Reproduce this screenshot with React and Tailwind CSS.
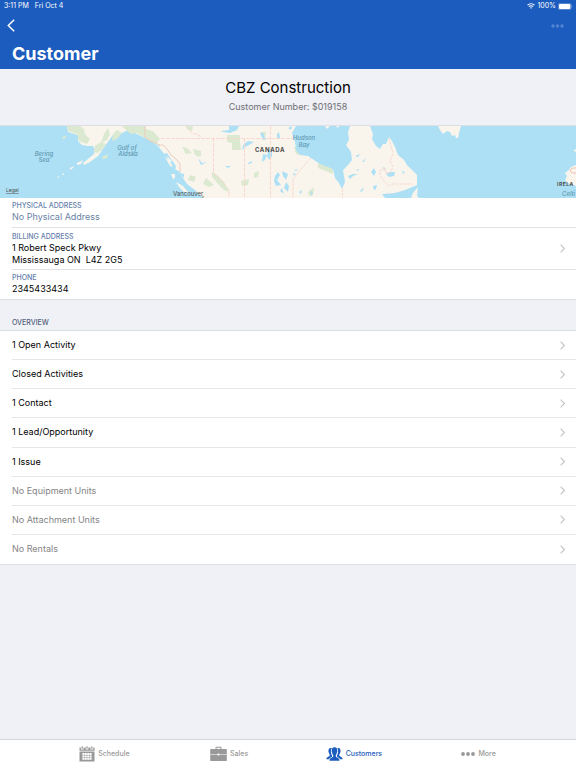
import React, { useState } from "react";

const OVERVIEW = [
  { label: "1 Open Activity" },
  { label: "Closed Activities" },
  { label: "1 Contact" },
  { label: "1 Lead/Opportunity" },
  { label: "1 Issue" },
  { label: "No Equipment Units", empty: true },
  { label: "No Attachment Units", empty: true },
  { label: "No Rentals", empty: true },
];

const Chevron = () => (
  <svg viewBox="0 0 5 9" className="w-[5px] h-[9px] shrink-0 text-[#c4c4c8]" fill="none" stroke="currentColor" strokeWidth="1.1" aria-hidden="true">
    <path d="M0.6 0.6 4.4 4.5 0.6 8.4" />
  </svg>
);

const CalendarIcon = () => (
  <svg viewBox="0 0 16 16" className="w-4 h-4" fill="currentColor" aria-hidden="true">
    <path d="M2.6 0.3h1.2v2.4H2.6zM7.4 0.3h1.2v2.4H7.4zM12.2 0.3h1.2v2.4h-1.2z" />
    <path d="M0.5 1.6h1.4v1.8h2.6V1.6h2.2v1.8h2.6V1.6h2.2v1.8h2.6V1.6h1.4V4.8H0.5z" />
    <path fillRule="evenodd" d="M0.5 5.5h15v10h-15zM3.4 7v6.8h9.2V7z" />
    <path d="M5.5 7h.4v6.8h-.4zM7.8 7h.4v6.8h-.4zM10.1 7h.4v6.8h-.4zM3.4 9h9.2v.4H3.4zM3.4 11.3h9.2v.4H3.4z" />
  </svg>
);

const BriefcaseIcon = () => (
  <svg viewBox="0 0 17 16" className="w-[17px] h-4" fill="currentColor" aria-hidden="true">
    <path fillRule="evenodd" d="M5.5 3V1.8c0-.6.4-1 1-1h4c.6 0 1 .4 1 1V3h4.8c.3 0 .5.2.5.5v4.8H9.3V7.4H7.7v.9H.2V3.5c0-.3.2-.5.5-.5zM6.5 3h4V1.8h-4z" />
    <path d="M.2 8.8h7.5v.8h1.6v-.8h7.5v5.7c0 .3-.2.5-.5.5H.7c-.3 0-.5-.2-.5-.5z" />
  </svg>
);

const PeopleIcon = () => (
  <svg viewBox="0 0 17 14" className="w-[17px] h-[14px]" fill="currentColor" aria-hidden="true">
    <path d="M5.2 1C3.3.8 2.3 2 2.5 4c-.2.4 0 1.1.2 1.3.2 1 .5 1.6 1 2.1v1.4C3.4 9.8.5 9.7.3 12.3h2.9c.3-1.6 1.5-2.1 2.8-2.600V8.400C5.300 7.300 4.900 5.900 4.900 3.900 4.900 2.700 5.200 1.800 5.900 1.200z" />
    <path d="M11.800 1c1.900-.2 2.900 1 2.700 3 .2.400 0 1.100-.2 1.300-.2 1-.5 1.600-1 2.100v1.400c.3 1 3.200.9 3.400 3.500h-2.900c-.3-1.600-1.500-2.100-2.800-2.600V8.400c.7-1.100 1.100-2.500 1.100-4.500 0-1.200-.3-2.100-1-2.700z" />
    <path d="M8.500.3c-2.100 0-2.900 1.400-2.700 3.500-.4.300-.1 1.500.3 1.800.2 1.200.5 1.900 1.100 2.500v1.500c-.5 1.100-3.500 1-3.700 4.100h10c-.2-3.100-3.200-3-3.700-4.100V8.100c.6-.6.9-1.300 1.100-2.500.4-.3.700-1.500.3-1.800.2-2.100-.6-3.500-2.700-3.500z" />
  </svg>
);

const DotsIcon = () => (
  <svg viewBox="0 0 14 4" className="w-[14px] h-1" fill="currentColor" aria-hidden="true">
    <circle cx="2" cy="2" r="1.9" />
    <circle cx="7" cy="2" r="1.9" />
    <circle cx="12" cy="2" r="1.9" />
  </svg>
);

const TABS = [
  { label: "Schedule", Icon: CalendarIcon },
  { label: "Sales", Icon: BriefcaseIcon },
  { label: "Customers", Icon: PeopleIcon },
  { label: "More", Icon: DotsIcon },
];

const CustomerMap = () => (
  <svg viewBox="0 0 576 72" preserveAspectRatio="xMidYMid slice" className="block w-full h-[72px] bg-[#ade0f5]" role="img" aria-label="Map">
    {/* land */}
    <g fill="#f9f5ed">
      <path d="M67 0 68 6 78 9 78 15 82 19 88 20 93 20 95 24 94 28 88 33 83 37 84 39 90 36 98 30 105 20 110 13 115 6 122 7 128 4 137 8 145 12 151 15 157 19 162 25 168 33 175 43 180 46 183 52 187 58 195 64 203 72 385 72 382 68 395 67 405 64 417 59 417 49 407 39 404 34 398 29 395 21 392 15 389 11 386 18 383 18 380 23 376 20 372 13 373 8 370 0z" />
      <path d="M438 0 440 4 443 8 447 5 450 6 452 10 455 9 456 12 458 12 459 7 461 0z" />
      <path d="M576 39 571 41 569 44 565 47 567 50 565 54 568 57 576 60zM576 23 574 24 574 25 576 26z" />
      <path d="M411 72 413 67 418 61 417 70 419 72zM77 37 83 34 81 38 77 39zM70 42 74 40 73 42 70 44zM62 49 64 47 64 49zM57 51 60 50 58 52z" />
    </g>
    {/* parks and forest */}
    <g fill="#dbe9d0">
      <path d="M67 0 68 5 77 8 79 15 87 18 90 13 85 8 84 3 80 0zM62 11 66 10 66 12 63 13zM95 20 101 16 106 18 102 24 97 27 94 26zM101 17 104 8 108 2 110 8 107 14zM113 8 117 4 122 7 117 13 112 15zM102 31 108 28 107 32 103 33zM122 0 145 0 145 12 137 7 131 8 125 3zM145 3 153 5 160 13 156 18 146 12z" />
      <path d="M227 9 240 9 240 16 241 24 232 24 232 17 227 16zM182 21 187 22 192 27 186 28zM193 23 201 25 201 30 195 29zM196 28 200 30 197 31zM186 0 193 0 192 5 187 3zM261 6 266 6 265 12 261 9zM212 46 217 49 224 56 229 66 224 64 219 59 212 51zM190 49 196 51 194 56 188 54zM206 52 214 59 209 61 203 58zM254 47 259 45 258 51 254 52zM241 55 249 53 248 59 242 60zM318 37 333 42 333 48 328 46 318 42zM294 21 299 21 300 29 296 28zM308 66 314 61 313 69 309 70z" />
    </g>
    {/* Hudson Bay, lakes and coastal inlets */}
    <g fill="#ade0f5">
      <path d="M296 0 292 7 295 16 296 24 300 29 308 30 314 34 320 38 333 43 335 52 339 57 342 63 345 56 343 44 348 39 352 34 351 26 346 19 349 14 348 6 350 0z" />
      <path d="M221 5 229 4 229 0 239 0 237 4 230 7 223 6zM243 19 248 15 254 16 249 19 245 21 242 24zM260 7 263 7 266 14 263 14zM277 8 279 6 280 12 277 13zM288 2 292 0 291 4zM268 24 272 22 272 30 270 34 267 31zM263 28 267 29 265 34 262 36zM198 32 202 37 207 36 201 39zM225 40 231 40 228 42zM248 37 252 35 252 37 248 38zM275 50 278 46 280 49 277 54 281 59 276 60 274 55zM282 45 288 48 286 54 283 50zM286 56 289 60 288 66 284 62zM282 62 284 68 280 65z" />
      <path d="M348 50 353 48 358 48 353 50 350 53zM355 30 360 28 358 31zM356 44 359 43 358 45zM360 65 364 61 362 66zM371 46 374 42 376 46 374 50zM383 41 385 42 384 45zM386 48 389 46 395 46 394 50 389 51zM373 60 377 59 376 63 374 64zM294 44 298 43 296 45zM293 47 296 48 294 50zM402 45 405 46 403 48zM299 66 302 64 301 68zM362 36 366 32 364 36z" />
      <path d="M164 28 167 27 171 33 176 40 175 44 169 39zM157 18 159 18 160 21zM180 47 184 48 184 52zM311 65 313 67 311 70z" />
    </g>
    <g fill="#f9f5ed">
      <path d="M165 31 169 34 173 41 170 40zM171 48 175 48 175 52 173 53zM176 56 183 60 189 67 184 66 179 61zM166 29 172 35 170 36zM336 0 339 0 338 2zM325 0 330 0 327 3z" />
    </g>
    {/* borders */}
    <g fill="none" stroke="#f7d5cc" strokeWidth="0.9">
      <path d="M145 0V11L150 15 156 17 159 19 163 19 167 23 171 29 176 33 180 38 180 46" stroke="#eac5b8" />
      <path d="M161 12.5H293M213.5 12V46L216 50 222 55 229 64V72M244.5 12V72M270.5 0V72M186 0 192 7 199 9 201 12" strokeDasharray="4 1" />
      <path d="M311 32 301 43 293 53V72M342.5 63V72M389 12 391 20 393 28 390 35 393 41 389 48 385 46 386 42 380 44 380 49 384 55 389 60 392 58 413 58" strokeDasharray="3 1" />
      <path d="M576 42 572 42 570 45 573 47 576 47" stroke="#efb9ad" />
    </g>
    <g className="text-[6px] italic" fill="#5d97b0" fontWeight="500" textAnchor="middle">
      <text x="44" y="30">Bering</text>
      <text x="44" y="36">Sea</text>
      <text x="127" y="24">Gulf of</text>
      <text x="128" y="30">Alaska</text>
      <text x="304" y="14">Hudson</text>
      <text x="304" y="21">Bay</text>
      <text x="562" y="70" textAnchor="start">Celti</text>
    </g>
    <g className="text-[6px]" fill="#4a4a48">
      <text x="255" y="26" fontWeight="700" className="tracking-widest">CANADA</text>
      <text x="557" y="60" fontWeight="700" className="text-[5px] tracking-widest">IRELA</text>
      <text x="173" y="70">Vancouver</text>
      <circle cx="203" cy="71" r="0.9" fill="none" stroke="#777" strokeWidth="0.5" />
      <text x="6" y="66" className="text-[5px] underline">Legal</text>
    </g>
  </svg>
);

const App = () => {
  const [activeTab, setActiveTab] = useState("Customers");

  return (
    <div className="min-h-screen flex flex-col bg-[#eff1f7] font-['Inter','Liberation_Sans',sans-serif] text-black">
      <header className="bg-[#1c5cbe] text-white h-[69px] flex flex-col">
        <div className="flex items-center justify-between h-3 pl-1 pr-[3px] text-[7px] leading-3">
          <div className="flex gap-[6px]">
            <span>3:11 PM</span>
            <span>Fri Oct 4</span>
          </div>
          <div className="flex items-center gap-[2px]">
            <svg viewBox="0 0 8 6" className="w-2 h-[6px]" fill="none" stroke="currentColor" strokeWidth="1.1" aria-hidden="true">
              <path d="M0.5 2.2C2.5.2 5.5.2 7.5 2.2M1.9 3.7C3.1 2.5 4.9 2.5 6.1 3.7" />
              <path d="M4 5.8 2.9 4.7a1.6 1.6 0 0 1 2.2 0z" fill="currentColor" stroke="none" />
            </svg>
            <span>100%</span>
            <svg viewBox="0 0 15 7" className="w-[15px] h-[7px]" aria-hidden="true">
              <rect x="0.3" y="0.3" width="12.8" height="6.4" rx="1.7" fill="none" stroke="#8eaedf" strokeWidth="0.6" />
              <rect x="1" y="1" width="11.4" height="5" rx="1.1" fill="#fff" />
              <path d="M13.7 2.4c.8.2.8 2 0 2.2z" fill="#8eaedf" />
            </svg>
          </div>
        </div>
        <div className="flex items-center justify-between h-[27px] pl-[7px] pr-3">
          <button type="button" aria-label="Back" className="cursor-pointer">
            <svg viewBox="0 0 8 13" className="w-2 h-[13px]" fill="none" stroke="currentColor" strokeWidth="1.5">
              <path d="M7.2.8 1.3 6.5l5.9 5.7" />
            </svg>
          </button>
          <button type="button" aria-label="More options" className="cursor-pointer text-[#5585d2]">
            <svg viewBox="0 0 13 4" className="w-[13px] h-1" fill="currentColor">
              <circle cx="2" cy="2" r="1.7" />
              <circle cx="6.5" cy="2" r="1.7" />
              <circle cx="11" cy="2" r="1.7" />
            </svg>
          </button>
        </div>
        <h1 className="pl-3 text-[18px] leading-[30px] font-bold">Customer</h1>
      </header>

      <main>
        <section className="h-[57px] flex flex-col items-center pt-[9px] border-b border-[#dedfe5]">
          <h2 className="text-[15px] leading-5">CBZ Construction</h2>
          <p className="mt-[3px] text-[9px] leading-3 text-[#6f6f73]">Customer Number: $019158</p>
        </section>

        <CustomerMap />

        <section className="bg-white pl-3 border-b border-[#dcdee5] text-[9px] leading-3">
          <div className="h-[30px] pt-[3px] border-b border-[#e2e3e8]">
            <h3 className="text-[7px] leading-[10px] font-medium text-[#6580ab]">PHYSICAL ADDRESS</h3>
            <p className="text-[#6a82a5]">No Physical Address</p>
          </div>
          <button type="button" className="w-full h-[42px] flex items-center justify-between pr-[11px] border-b border-[#e2e3e8] text-left cursor-pointer">
            <span className="flex flex-col">
              <span className="text-[7px] leading-[10px] font-medium text-[#6580ab]">BILLING ADDRESS</span>
              <span>1 Robert Speck Pkwy</span>
              <span className="whitespace-pre">Mississauga ON  L4Z 2G5</span>
            </span>
            <Chevron />
          </button>
          <div className="h-[29px] pt-[3px]">
            <h3 className="text-[7px] leading-[10px] font-medium text-[#6580ab]">PHONE</h3>
            <p>2345433434</p>
          </div>
        </section>

        <section>
          <h3 className="h-[31px] pl-3 pt-[18px] text-[7px] leading-[10px] font-medium text-[#52617a] border-b border-[#dcdee5]">OVERVIEW</h3>
          <ul className="grid grid-rows-8 min-h-[234px] bg-white pl-3 border-b border-[#dcdee5]">
            {OVERVIEW.map((item) => (
              <li key={item.label} className="flex border-b border-[#e6e7ea] last:border-b-0">
                <button
                  type="button"
                  className={`w-full flex items-center justify-between pr-[11px] text-[9px] leading-3 cursor-pointer ${item.empty ? "text-[#858585]" : "text-black"}`}
                >
                  {item.label}
                  <Chevron />
                </button>
              </li>
            ))}
          </ul>
        </section>
      </main>

      <nav className="mt-auto h-[29px] grid grid-cols-4 pl-[42px] pr-[35px] bg-white border-t border-[#d5d6db]">
        {TABS.map(({ label, Icon }) => (
          <button
            key={label}
            type="button"
            onClick={() => setActiveTab(label)}
            className={`flex items-center justify-center gap-[3px] text-[7px] leading-[10px] font-medium cursor-pointer ${activeTab === label ? "text-[#1c5cbe]" : "text-[#999999]"}`}
          >
            <Icon />
            {label}
          </button>
        ))}
      </nav>
    </div>
  );
};

export default App;
